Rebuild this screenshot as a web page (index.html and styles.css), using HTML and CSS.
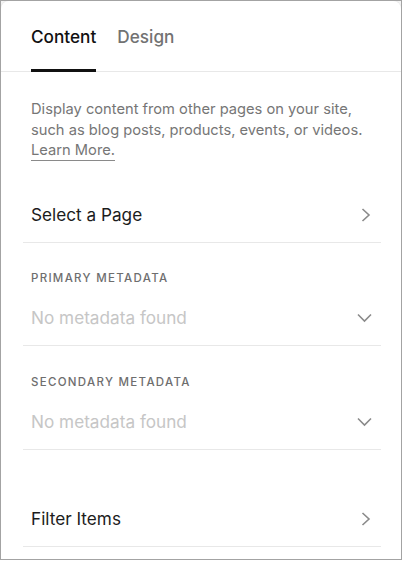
FILE: index.html
```html
<!DOCTYPE html>
<html lang="en">
<head>
<meta charset="utf-8">
<title>Summary Block Content</title>
<link rel="stylesheet" href="styles.css">
</head>
<body>
<div class="frame">
  <div class="panel">
    <nav class="tabs">
      <div class="tab tab-active">Content</div>
      <div class="tab">Design</div>
    </nav>
    <p class="intro">Display content from other pages on your site, such as blog posts, products, events, or videos. <a class="learn" href="#">Learn More.</a></p>
    <div class="list">
      <div class="row row-first">
        <span class="row-label">Select a Page</span>
        <svg class="chev-right" width="10" height="14" viewBox="0 0 10 14"><path d="M1.5 1 L8 7 L1.5 13" fill="none" stroke="#8a8a8a" stroke-width="1.6"/></svg>
      </div>
      <div class="meta">
        <div class="meta-label">Primary Metadata</div>
        <div class="meta-value">
          <span>No metadata found</span>
          <svg class="chev-down" width="15" height="10" viewBox="0 0 15 10"><path d="M1 1.5 L7.5 8 L14 1.5" fill="none" stroke="#8a8a8a" stroke-width="1.6"/></svg>
        </div>
      </div>
      <div class="meta meta-second">
        <div class="meta-label">Secondary Metadata</div>
        <div class="meta-value">
          <span>No metadata found</span>
          <svg class="chev-down" width="15" height="10" viewBox="0 0 15 10"><path d="M1 1.5 L7.5 8 L14 1.5" fill="none" stroke="#8a8a8a" stroke-width="1.6"/></svg>
        </div>
      </div>
      <div class="row row-filter">
        <span class="row-label">Filter Items</span>
        <svg class="chev-right" width="10" height="14" viewBox="0 0 10 14"><path d="M1.5 1 L8 7 L1.5 13" fill="none" stroke="#8a8a8a" stroke-width="1.6"/></svg>
      </div>
    </div>
  </div>
</div>
</body>
</html>
```

FILE: styles.css
```css
html, body {
  margin: 0;
  padding: 0;
  background: #ffffff;
}

body {
  font-family: "Inter", "Liberation Sans", Arial, sans-serif;
  color: #1a1a1a;
}

.frame {
  width: 402px;
  height: 560px;
  box-sizing: border-box;
  border: 1px solid #a3a3a3;
  background: #f4f4f4;
  overflow: hidden;
}

.panel {
  height: 100%;
  box-sizing: border-box;
  background: #ffffff;
  border-radius: 8px 8px 0 0;
  box-shadow: 0 0 0 1px #ececec;
}

.tabs {
  display: flex;
  gap: 21px;
  padding: 0 30px;
  border-bottom: 1px solid #e8e8e8;
}

.tab {
  font-size: 17.2px;
  font-weight: 500;
  line-height: 20px;
  color: #727272;
  padding-top: 26px;
  padding-bottom: 22px;
  border-bottom: 3px solid transparent;
  margin-bottom: -1px;
}

.tab-active {
  color: #111111;
  border-bottom-color: #111111;
}

.intro {
  margin: 27px 30px 0 30px;
  font-size: 14.7px;
  line-height: 20.5px;
  color: #767676;
}

.learn {
  color: #767676;
  text-decoration: none;
  border-bottom: 1px solid #8a8a8a;
  padding-bottom: 1px;
}

.list {
  margin: 0 20px 0 22px;
}

.row {
  height: 54px;
  box-sizing: border-box;
  display: flex;
  align-items: center;
  justify-content: space-between;
  padding: 0 10px 0 8px;
  border-bottom: 1px solid #e8e8e8;
}

.row-first {
  margin-top: 28px;
}

.row-filter {
  margin-top: 43px;
}

.row-label {
  font-size: 17.2px;
  line-height: 20px;
  color: #1c1c1c;
}

.meta {
  padding: 28px 8px 17px 8px;
  border-bottom: 1px solid #e8e8e8;
}

.meta-second {
  padding-top: 29px;
}

.meta-label {
  font-size: 11.5px;
  font-weight: 500;
  line-height: 14px;
  letter-spacing: 1.3px;
  text-transform: uppercase;
  color: #6e6e6e;
}

.meta-value {
  margin-top: 23px;
  display: flex;
  align-items: center;
  justify-content: space-between;
  font-size: 17.2px;
  line-height: 20px;
  color: #c6c6c6;
}

.chev-down {
  margin-right: 1px;
}
```
